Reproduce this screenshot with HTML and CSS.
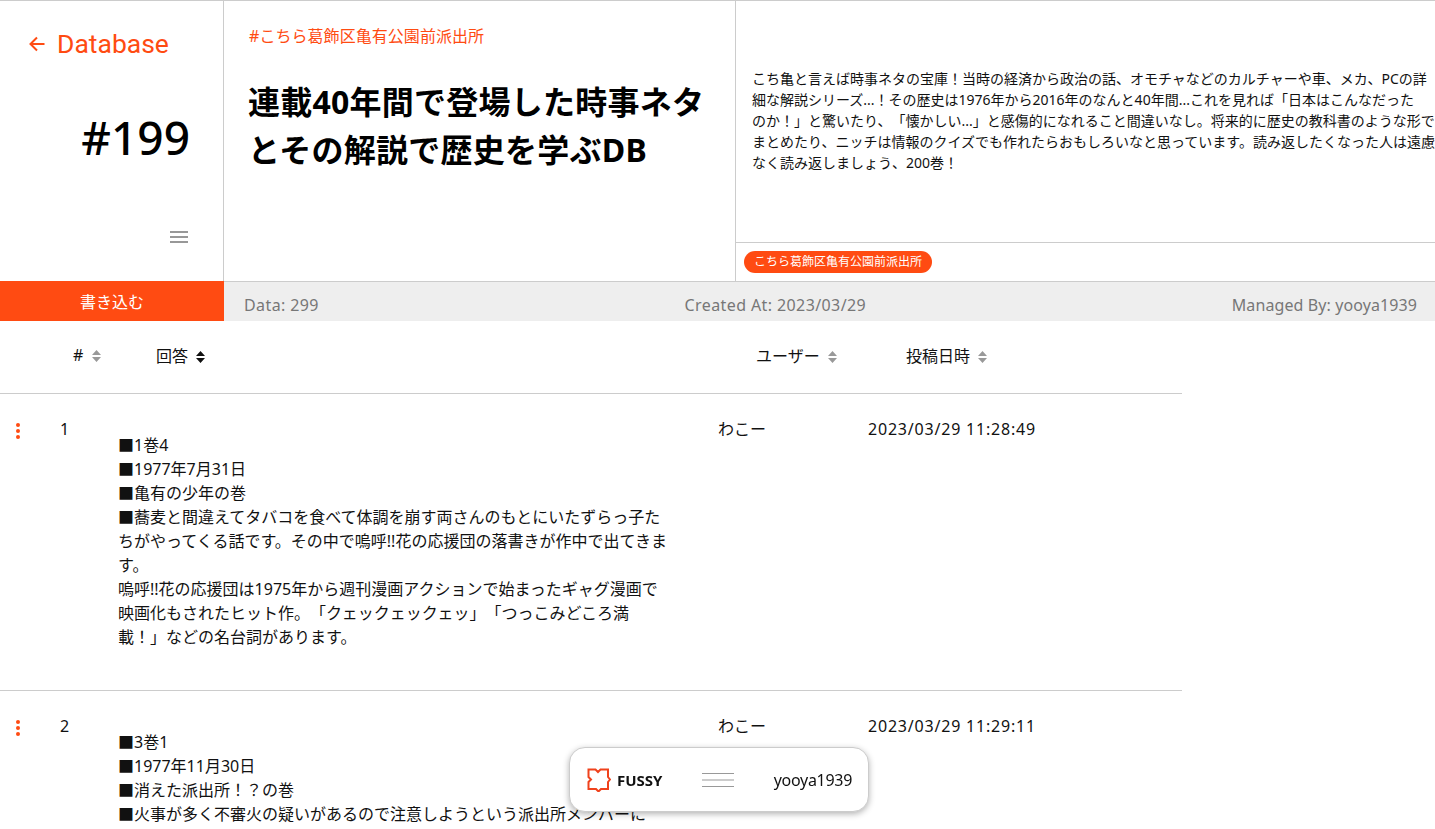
FILE: index.html
```html
<!DOCTYPE html>
<html lang="ja">
<head>
    <meta charset="UTF-8">
    <title>#199 Database</title>
    <link rel="stylesheet" href="styles.css">
</head>
<body>

    <div class="board-header">
        <div class="side">
            <a href="#" class="back-link">
                <svg class="back-icon" viewBox="0 0 18 18"><path d="M16.5 9H2.5M9 2.5L2.5 9L9 15.5"/></svg>
                Database
            </a>
            <div class="board-no">#199</div>
            <div class="side-menu">
                <svg class="menu-icon" viewBox="0 0 18 12"><path d="M0 1H18M0 6H18M0 11H18"/></svg>
            </div>
        </div>
        <div class="title-box">
            <a href="#" class="category">#こちら葛飾区亀有公園前派出所</a>
            <h1>連載40年間で登場した時事ネタとその解説で歴史を学ぶDB</h1>
        </div>
        <div class="desc-box">
            <div class="desc">
                <p>こち亀と言えば時事ネタの宝庫！当時の経済から政治の話、オモチャなどのカルチャーや車、メカ、PCの詳細な解説シリーズ...！その歴史は1976年から2016年のなんと40年間...これを見れば「日本はこんなだった<br>のか！」と驚いたり、「懐かしい...」と感傷的になれること間違いなし。将来的に歴史の教科書のような形でまとめたり、ニッチは情報のクイズでも作れたらおもしろいなと思っています。読み返したくなった人は遠慮なく読み返しましょう、200巻！</p>
            </div>
            <div class="tags"><span class="tag">こちら葛飾区亀有公園前派出所</span></div>
        </div>
    </div>

    <div class="info-bar">
        <button class="write-btn">書き込む</button>
        <div class="info">
            <span class="info-wide">Data: 299</span>
            <span class="info-wide">Created At: 2023/03/29</span>
            <span class="info-user">Managed By: yooya1939</span>
        </div>
    </div>

    <table class="post-table">
        <colgroup>
            <col class="col-menu">
            <col class="col-no">
            <col class="col-answer">
            <col class="col-user">
            <col class="col-date">
        </colgroup>
        <thead>
            <tr>
                <th></th>
                <th class="th-no"># <svg class="sort" viewBox="0 0 9 14"><path d="M4.5 1L9 6H0ZM4.5 13L0 8H9Z"/></svg></th>
                <th>回答 <svg class="sort active" viewBox="0 0 9 14"><path d="M4.5 1L9 6H0ZM4.5 13L0 8H9Z"/></svg></th>
                <th>ユーザー <svg class="sort" viewBox="0 0 9 14"><path d="M4.5 1L9 6H0ZM4.5 13L0 8H9Z"/></svg></th>
                <th>投稿日時 <svg class="sort" viewBox="0 0 9 14"><path d="M4.5 1L9 6H0ZM4.5 13L0 8H9Z"/></svg></th>
            </tr>
        </thead>
        <tbody>
            <tr>
                <td class="td-menu"><span class="dots"><i></i><i></i><i></i></span></td>
                <td class="num">1</td>
                <td class="answer">
                    ■1巻4<br>
                    ■1977年7月31日<br>
                    ■亀有の少年の巻<br>
                    ■蕎麦と間違えてタバコを食べて体調を崩す両さんのもとにいたずらっ子たちがやってくる話です。その中で嗚呼!!花の応援団の落書きが作中で出てきます。<br>
                    嗚呼!!花の応援団は1975年から週刊漫画アクションで始まったギャグ漫画で映画化もされたヒット作。「クェックェックェッ」「つっこみどころ満載！」などの名台詞があります。
                </td>
                <td>わこー</td>
                <td class="date">2023/03/29 11:28:49</td>
            </tr>
            <tr>
                <td class="td-menu"><span class="dots"><i></i><i></i><i></i></span></td>
                <td class="num">2</td>
                <td class="answer">
                    ■3巻1<br>
                    ■1977年11月30日<br>
                    ■消えた派出所！？の巻<br>
                    ■火事が多く不審火の疑いがあるので注意しようという派出所メンバーに
                </td>
                <td>わこー</td>
                <td class="date">2023/03/29 11:29:11</td>
            </tr>
        </tbody>
    </table>

    <div class="float-bar">
        <a href="#" class="brand">
            <svg class="brand-icon" viewBox="0 0 24 24"><path d="M1.5 1.5H8.5L11 4L13.5 1.5H21V9L23 11.5L21 14V21H14L11.5 23.5L9 21H1.5V14L4 11.5L1.5 9Z"/></svg>
            FUSSY
        </a>
        <svg class="float-menu" viewBox="0 0 32 16"><path d="M0 1.5H32M0 8H32M0 14.5H32"/></svg>
        <span class="float-user">yooya1939</span>
    </div>

</body>
</html>
```

FILE: styles.css
```css
html,
body {
    height: 100%;
    overflow: hidden;
}

body {
    margin: 0;
    font-family: "Noto Sans", "Noto Sans CJK JP", sans-serif;
    font-size: 16px;
    color: #111;
    background-color: #fff;
    text-spacing-trim: space-all;
}

a {
    text-decoration: none;
}

.board-header {
    display: grid;
    grid-template-columns: 224px 512px 1fr;
    height: 281px;
    border-top: 1px solid #ccc;
    box-sizing: border-box;
}

.side {
    display: flex;
    flex-direction: column;
    border-right: 1px solid #ccc;
}

.back-link {
    display: flex;
    align-items: center;
    gap: 11px;
    padding: 24px 0 0 28px;
    font-family: Roboto, sans-serif;
    font-size: 26.5px;
    line-height: 38px;
    color: #ff4b12;
}

.back-icon {
    width: 18px;
    height: 18px;
    fill: none;
    stroke: #ff4b12;
    stroke-width: 2;
}

.board-no {
    margin-top: 39px;
    padding-right: 33px;
    text-align: right;
    font-size: 46px;
    font-weight: 500;
    line-height: 70px;
    color: #000;
}

.side-menu {
    margin-top: auto;
    padding: 0 35px 38px 0;
    display: flex;
    justify-content: flex-end;
}

.menu-icon {
    width: 18px;
    height: 12px;
    fill: none;
    stroke: #777;
    stroke-width: 1.5;
}

.title-box {
    padding: 23px 24px 0 25px;
    border-right: 1px solid #ccc;
}

.category {
    display: block;
    font-size: 16px;
    line-height: 24px;
    letter-spacing: 0.05px;
    color: #ff4b12;
}

.title-box h1 {
    margin: 30px 0 0 -1px;
    font-size: 32px;
    line-height: 48px;
    font-weight: 700;
    letter-spacing: 0.25px;
    color: #000;
}

.desc-box {
    display: flex;
    flex-direction: column;
}

.desc {
    flex: 1;
    display: flex;
    align-items: center;
    padding-left: 16px;
    padding-bottom: 3px;
}

.desc p {
    margin: 0;
    font-size: 14px;
    line-height: 21px;
}

.tags {
    height: 39px;
    box-sizing: border-box;
    display: flex;
    align-items: flex-start;
    padding-top: 8px;
    padding-left: 8px;
    border-top: 1px solid #ccc;
}

.tag {
    padding: 0 10px;
    border-radius: 11px;
    background-color: #ff4b12;
    color: #fff;
    font-size: 12px;
    line-height: 22px;
}

.info-bar {
    display: flex;
    height: 40px;
}

.write-btn {
    width: 224px;
    border: none;
    background-color: #ff4b12;
    color: #fff;
    font-family: inherit;
    font-size: 16px;
    padding: 0;
}

.info {
    flex: 1;
    display: flex;
    justify-content: space-between;
    align-items: center;
    padding: 6px 18px 0 20px;
    background-color: #eee;
    border-top: 1px solid #ccc;
    color: #777;
    font-size: 16px;
}

.info-wide {
    letter-spacing: 0.4px;
}

.info-user {
    letter-spacing: 0.1px;
}

.post-table {
    width: 1182px;
    table-layout: fixed;
    border-collapse: collapse;
}

.col-menu { width: 60px; }
.col-no { width: 58px; }
.col-answer { width: 600px; }
.col-user { width: 150px; }

.post-table th {
    height: 72px;
    padding: 0 0 4px 38px;
    box-sizing: border-box;
    text-align: left;
    font-weight: 400;
    border-bottom: 1px solid #ccc;
}

.post-table .th-no {
    padding-left: 13px;
}

.sort {
    width: 9px;
    height: 14px;
    margin-left: 4px;
    vertical-align: -2px;
    fill: #999;
}

.sort.active {
    fill: #111;
}

.post-table td {
    padding: 23px 0 0;
    line-height: 24px;
    vertical-align: top;
    border-bottom: 1px solid #ccc;
}

.post-table td.answer {
    padding: 39px 50px 41px 0;
}

.post-table .num,
.post-table .date {
    letter-spacing: 0.8px;
}

.dots {
    display: flex;
    flex-direction: column;
    gap: 2px;
    padding: 6px 0 0 16px;
}

.dots i {
    width: 4px;
    height: 4px;
    border-radius: 50%;
    background-color: #ff4b12;
}

.float-bar {
    position: fixed;
    left: 569px;
    bottom: 17px;
    width: 300px;
    height: 65px;
    box-sizing: border-box;
    display: flex;
    align-items: center;
    padding: 0 16px 0 17px;
    background-color: #fff;
    border: 1px solid #ccc;
    border-radius: 16px;
    box-shadow: 0 2px 6px rgba(0, 0, 0, 0.3);
}

.brand {
    display: flex;
    align-items: center;
    gap: 6px;
    font-size: 15px;
    font-weight: 700;
    color: #111;
}

.brand-icon {
    width: 24px;
    height: 24px;
    fill: none;
    stroke: #f0421c;
    stroke-width: 2;
}

.float-menu {
    width: 32px;
    height: 16px;
    margin-left: 39px;
    fill: none;
    stroke: #999;
    stroke-width: 1;
}

.float-user {
    margin-left: auto;
    letter-spacing: -0.3px;
    color: #111;
}
```
